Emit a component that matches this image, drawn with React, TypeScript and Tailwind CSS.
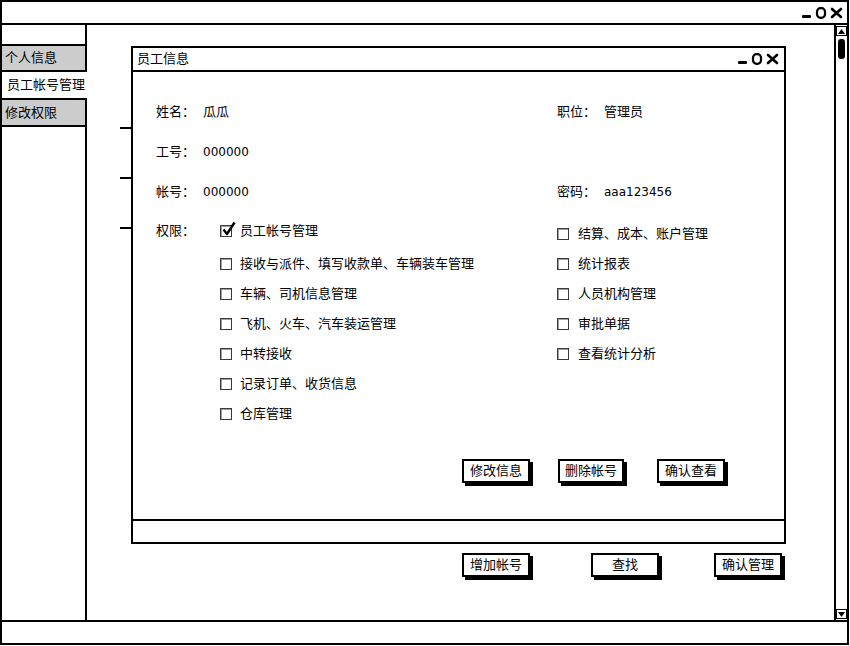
import React from 'react';

const Controls = () => (
  <svg width="42" height="12" viewBox="0 0 42 12">
    <rect x="0" y="8" width="9" height="3" rx="1" fill="#000" />
    <rect x="15" y="1.2" width="8" height="9.6" rx="3.5" fill="none" stroke="#000" strokeWidth="2.2" />
    <path d="M30 2 L39 10 M39 2 L30 10" stroke="#000" strokeWidth="2.6" strokeLinecap="round" />
  </svg>
);

const Box = ({ checked }: { checked?: boolean }) => (
  <span className="relative w-[12px] h-[12px] shrink-0 border border-[#3a3a3a] bg-white shadow-[inset_1px_1px_0_#a0a0a0]">
    {checked && (
      <svg className="absolute -top-[5px] left-[1px]" width="14" height="15" viewBox="0 0 14 15">
        <path d="M1.5 8.5 L5 13 L12.5 1.5" fill="none" stroke="#000" strokeWidth="2.4" strokeLinejoin="round" />
      </svg>
    )}
  </span>
);

const Btn = ({ label, className = '' }: { label: string; className?: string }) => (
  <div className={`h-[24px] flex items-center justify-center border-2 border-black bg-white shadow-[3px_3px_0_#000] text-[13px] ${className}`}>
    {label}
  </div>
);

const Field = ({ label, value, latin }: { label: string; value: string; latin?: boolean }) => (
  <div className="flex items-center">
    <span className="w-[47px]">{label}</span>
    <span className={latin ? 'text-[12px]' : ''}>{value}</span>
  </div>
);

const LEFT = ['员工帐号管理', '接收与派件、填写收款单、车辆装车管理', '车辆、司机信息管理', '飞机、火车、汽车装运管理', '中转接收', '记录订单、收货信息', '仓库管理'];
const RIGHT = ['结算、成本、账户管理', '统计报表', '人员机构管理', '审批单据', '查看统计分析'];

export default function App() {
  return (
    <div className="w-[850px] h-[646px] bg-white text-black text-[13px] font-['DejaVu_Sans','Noto_Sans_CJK_SC',sans-serif]">
      <div className="w-[849px] h-[645px] border-2 border-black flex flex-col">
        {/* Title bar */}
        <div className="h-[23px] border-b-2 border-black flex items-center justify-end pr-[3px] shrink-0">
          <Controls />
        </div>

        <div className="flex-1 flex min-h-0">
          {/* Sidebar */}
          <div className="w-[85px] border-r-2 border-black pt-[19px] shrink-0">
            <div className="h-[28px] border-y-2 border-black bg-[#cccccc] flex items-center pl-[3px]">个人信息</div>
            <div className="relative z-10 w-[85px] h-[26px] bg-white flex items-center pl-[5px]">员工帐号管理</div>
            <div className="h-[29px] border-y-2 border-black bg-[#cccccc] flex items-center pl-[3px]">修改权限</div>
          </div>

          {/* Content */}
          <div className="flex-1 flex flex-col">
            <div className="flex pt-[21px]">
              <div className="ml-[33px] w-[11px] pt-[81px] flex flex-col gap-[48px]">
                <div className="h-[2px] bg-black" />
                <div className="h-[2px] bg-black" />
                <div className="h-[2px] bg-black" />
              </div>

              {/* Dialog */}
              <div className="w-[655px] h-[498px] border-2 border-black flex flex-col bg-white">
                <div className="h-[24px] border-b-2 border-black flex items-center justify-between pl-[4px] pr-[4px] shrink-0">
                  <span>员工信息</span>
                  <Controls />
                </div>
                <div className="flex-1 flex flex-col">
                  <div className="pl-[23px] pt-[20px] flex flex-col">
                    <div className="h-[40px] flex items-center">
                      <div className="w-[401px]"><Field label="姓名：" value="瓜瓜" /></div>
                      <Field label="职位：" value="管理员" />
                    </div>
                    <div className="h-[40px] flex items-center">
                      <Field label="工号：" value="000000" latin />
                    </div>
                    <div className="h-[40px] flex items-center">
                      <div className="w-[401px]"><Field label="帐号：" value="000000" latin /></div>
                      <Field label="密码：" value="aaa123456" latin />
                    </div>
                    <div className="flex mt-[4px]">
                      <div className="w-[401px] flex">
                        <span className="w-[64px] h-[30px] flex items-center">权限：</span>
                        <div className="flex flex-col">
                          {LEFT.map((t, i) => (
                            <div key={t} className={`h-[30px] flex items-center gap-[8px] ${i === 0 ? 'mb-[3px]' : ''}`}>
                              <Box checked={i === 0} />
                              <span>{t}</span>
                            </div>
                          ))}
                        </div>
                      </div>
                      <div className="flex flex-col pt-[3px]">
                        {RIGHT.map((t) => (
                          <div key={t} className="h-[30px] flex items-center gap-[9px]">
                            <Box />
                            <span>{t}</span>
                          </div>
                        ))}
                      </div>
                    </div>
                  </div>
                  <div className="flex mt-[30px] pl-[329px]">
                    <Btn label="修改信息" className="w-[68px]" />
                    <Btn label="删除帐号" className="w-[66px] ml-[28px]" />
                    <Btn label="确认查看" className="w-[68px] ml-[33px]" />
                  </div>
                </div>
                <div className="h-[23px] border-t-2 border-black shrink-0" />
              </div>
            </div>

            <div className="flex mt-[9px] pl-[375px]">
              <Btn label="增加帐号" className="w-[68px]" />
              <Btn label="查找" className="w-[68px] ml-[61px]" />
              <Btn label="确认管理" className="w-[68px] ml-[55px]" />
            </div>
          </div>

          {/* Scrollbar */}
          <div className="w-[13px] border-l-2 border-black flex flex-col items-center justify-between py-[1px] shrink-0">
            <div className="flex flex-col items-center gap-[3px]">
              <div className="w-[11px] h-[10px] border border-black flex items-center justify-center">
                <svg width="7" height="5" viewBox="0 0 7 5"><path d="M3.5 0 L7 5 L0 5 Z" fill="#000" /></svg>
              </div>
              <div className="w-[7px] h-[20px] rounded-[3px] bg-black" />
            </div>
            <div className="w-[11px] h-[10px] border border-black flex items-center justify-center">
              <svg width="7" height="5" viewBox="0 0 7 5"><path d="M0 0 L7 0 L3.5 5 Z" fill="#000" /></svg>
            </div>
          </div>
        </div>

        {/* Status bar */}
        <div className="h-[23px] border-t-2 border-black shrink-0" />
      </div>
    </div>
  );
}
